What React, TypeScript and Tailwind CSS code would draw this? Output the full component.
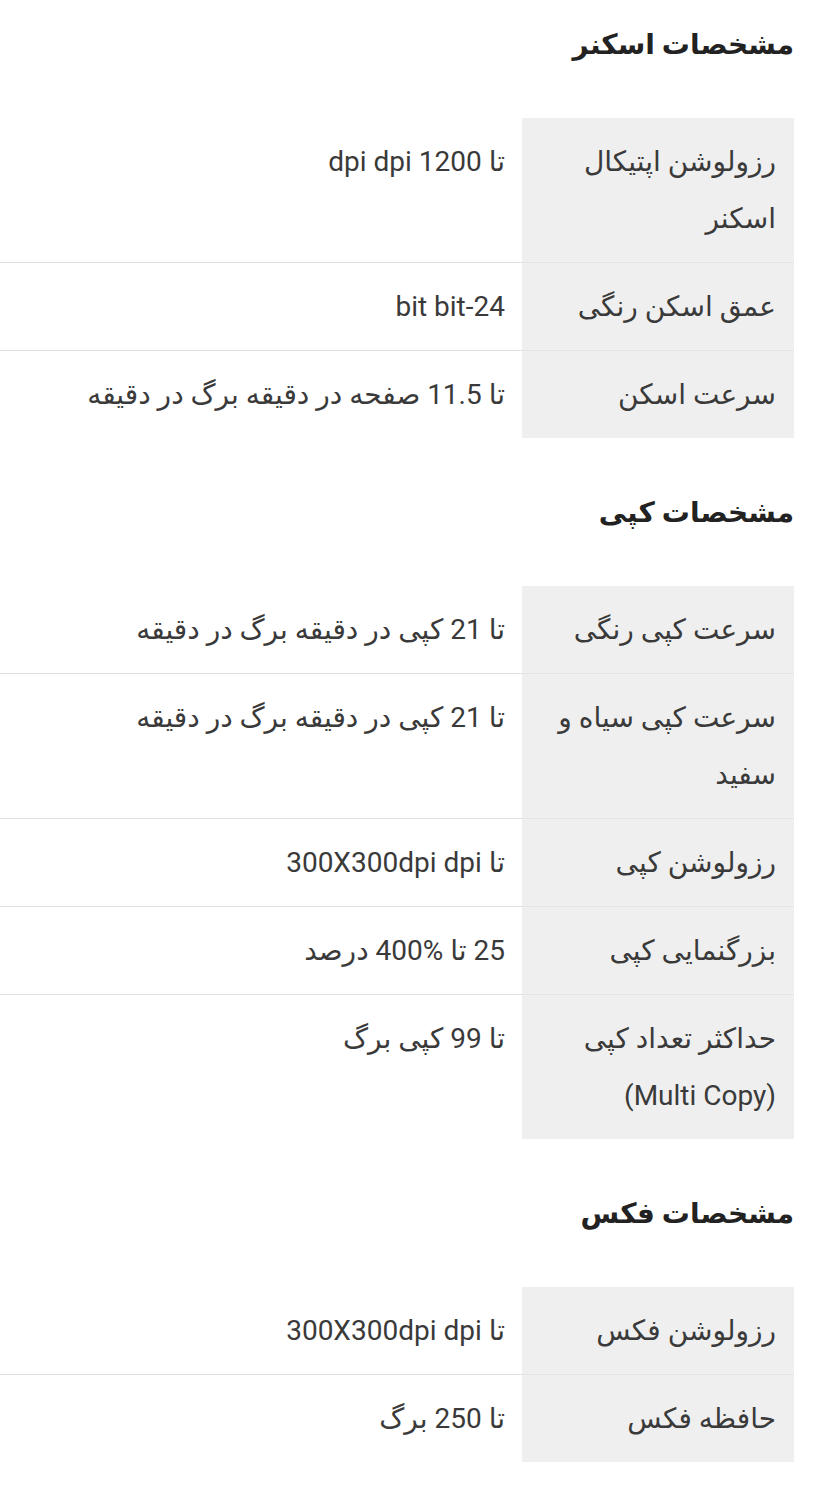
import React from "react";

type Row = { label: React.ReactNode; value: string };

const sections: { title: string; rows: Row[] }[] = [
  {
    title: "مشخصات اسکنر",
    rows: [
      { label: "رزولوشن اپتیکال اسکنر", value: "تا 1200 dpi dpi" },
      { label: "عمق اسکن رنگی", value: "24-bit bit" },
      { label: "سرعت اسکن", value: "تا 11.5 صفحه در دقیقه برگ در دقیقه" },
    ],
  },
  {
    title: "مشخصات کپی",
    rows: [
      { label: "سرعت کپی رنگی", value: "تا 21 کپی در دقیقه برگ در دقیقه" },
      { label: "سرعت کپی سیاه و سفید", value: "تا 21 کپی در دقیقه برگ در دقیقه" },
      { label: "رزولوشن کپی", value: "تا 300X300dpi dpi" },
      { label: "بزرگنمایی کپی", value: "25 تا %400 درصد" },
      {
        label: (
          <>
            حداکثر تعداد کپی{" "}
            <span dir="ltr" className="inline-block">
              (Multi Copy)
            </span>
          </>
        ),
        value: "تا 99 کپی برگ",
      },
    ],
  },
  {
    title: "مشخصات فکس",
    rows: [
      { label: "رزولوشن فکس", value: "تا 300X300dpi dpi" },
      { label: "حافظه فکس", value: "تا 250 برگ" },
    ],
  },
];

function SpecTable({ rows }: { rows: Row[] }) {
  return (
    <div className="grid grid-cols-[272px_1fr]">
      {rows.map((r, i) => {
        const last = i === rows.length - 1;
        return (
          <React.Fragment key={i}>
            <div
              className={`bg-[#efefef] pr-[18px] pl-3 py-[15px] text-[#3a3a3a] ${
                last ? "" : "border-b border-[#e4e4e4]"
              }`}
            >
              {r.label}
            </div>
            <div
              className={`pr-[17px] py-[15px] text-[#3a3a3a] ${
                last ? "" : "border-b border-[#e0e0e0]"
              }`}
            >
              {r.value}
            </div>
          </React.Fragment>
        );
      })}
    </div>
  );
}

export default function App() {
  return (
    <div
      dir="rtl"
      className="min-h-screen bg-white pr-[35px] pt-[25px] pb-10 font-['Roboto','DejaVu_Sans',sans-serif] text-[28px] leading-[57px]"
    >
      {sections.map((s, i) => (
        <section key={i} className={i === 0 ? "" : "mt-[55px]"}>
          <h2 className="mb-[53px] text-[28px] font-bold leading-[40px] text-[#222]">{s.title}</h2>
          <SpecTable rows={s.rows} />
        </section>
      ))}
    </div>
  );
}
